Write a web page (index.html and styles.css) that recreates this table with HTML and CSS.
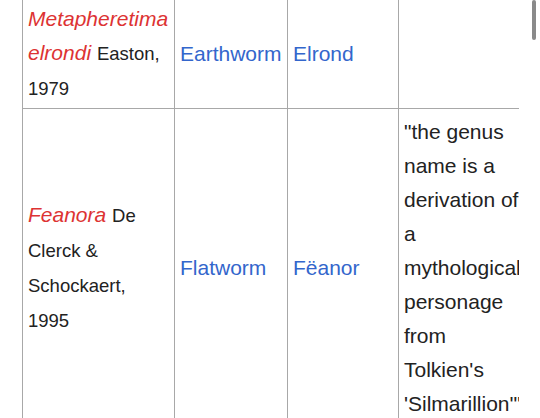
FILE: index.html
```html
<!DOCTYPE html>
<html>
<head>
<meta charset="utf-8">
<link rel="stylesheet" href="styles.css">
</head>
<body>
<div class="viewport">
  <table class="species">
    <colgroup>
      <col class="c1"><col class="c2"><col class="c3"><col class="c4">
    </colgroup>
    <tr>
      <td><i class="taxon">Metapheretima elrondi</i> <span class="author">Easton, 1979</span></td>
      <td><a class="link">Earthworm</a></td>
      <td><a class="link">Elrond</a></td>
      <td></td>
    </tr>
    <tr>
      <td><i class="taxon">Feanora</i> <span class="author">De Clerck &amp; Schockaert, 1995</span></td>
      <td><a class="link">Flatworm</a></td>
      <td><a class="link">Fëanor</a></td>
      <td>"the genus name is a derivation of a mythological personage from Tolkien's 'Silmarillion'"</td>
    </tr>
  </table>
</div>
<div class="scrollbar"></div>
</body>
</html>
```
FILE: styles.css
```css
html, body {
  margin: 0;
  padding: 0;
  background: #fff;
}
body {
  width: 540px;
  height: 418px;
  overflow: hidden;
  font-family: "Liberation Sans", Arial, sans-serif;
  color: #222;
}
.viewport {
  width: 519px;
  height: 418px;
  overflow: hidden;
}
.species {
  border-collapse: collapse;
  table-layout: fixed;
  width: 514px;
  margin-left: 22px;
  margin-top: -5px;
  font-size: 21px;
  line-height: 34px;
}
.c1 { width: 152px; }
.c2 { width: 113px; }
.c3 { width: 111px; }
.c4 { width: 138px; }
.species td {
  border: 1px solid #a8a8a8;
  padding: 6px 5px 2px;
  vertical-align: middle;
  text-align: left;
}
.taxon {
  color: #d33;
}
.author {
  font-size: 18.5px;
}
.link {
  color: #36c;
}
.scrollbar {
  position: absolute;
  left: 532px;
  top: 0;
  width: 4px;
  height: 40px;
  border-radius: 2px;
  background: #8a8a8a;
}
```
